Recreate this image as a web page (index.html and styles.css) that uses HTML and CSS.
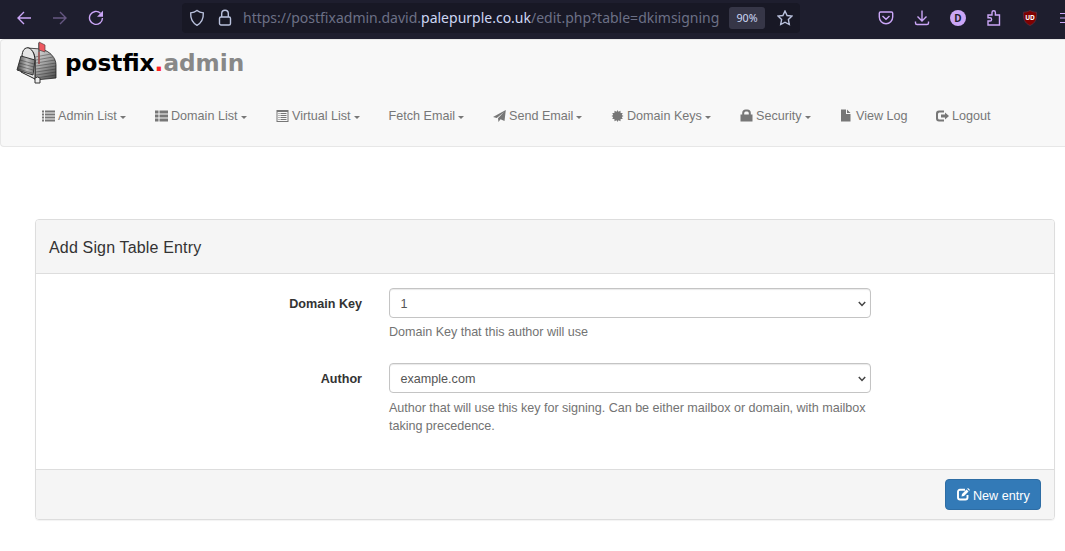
FILE: index.html
```html
<!DOCTYPE html>
<html lang="en">
<head>
<meta charset="utf-8">
<title>Postfix Admin</title>
<link rel="stylesheet" href="styles.css">
</head>
<body>
<header class="browser">
  <div class="history">
    <svg width="16" height="16" viewBox="0 0 16 16"><path d="M15 8H2M8 2L2 8l6 6"/></svg>
    <svg class="dim" width="16" height="16" viewBox="0 0 16 16"><path d="M1 8h13M8 2l6 6-6 6"/></svg>
    <svg width="16" height="16" viewBox="0 0 16 16"><path d="M12.500 3.200A6.500 6.500 0 1 0 14.500 8"/><path class="solid" d="M15 .8v6H9z"/></svg>
  </div>
  <div class="address">
    <svg width="16" height="18" viewBox="0 0 16 18"><path d="M8 1.500c2 1.600 4 2.200 6.300 2.400.3 6-1.600 9.800-6.300 12.400C3.300 13.700 1.400 9.900 1.700 3.900 4 3.700 6 3.100 8 1.500z"/></svg>
    <svg class="padlock" width="14" height="18" viewBox="0 0 14 18"><rect x="1.500" y="8" width="11" height="8" rx="1.500"/><path d="M3.700 8V4.500a3.300 3.300 0 0 1 6.600 0V8"/></svg>
    <span class="url">https://postfixadmin.david.<b>palepurple.co.uk</b>/edit.php?table=dkimsigning</span>
    <span class="zoom">90%</span>
    <svg class="star" width="16" height="16" viewBox="0 0 16 16"><path d="M8 1l2.100 4.500 4.900.6-3.600 3.400.9 5L8 12.200 3.700 14.500l.9-5L1 6.100l4.900-.6z"/></svg>
  </div>
  <div class="tools">
    <svg width="16" height="16" viewBox="0 0 16 16"><path d="M2.500 2h11q1.200 0 1.200 1.200V7A6.700 6.700 0 0 1 1.300 7V3.200Q1.300 2 2.500 2zM4.500 6L8 9.300 11.500 6"/></svg>
    <svg width="16" height="16" viewBox="0 0 16 16"><path d="M8 .5v10M3.500 6.500L8 11l4.500-4.500M1.500 11.500V13q0 1.500 1.500 1.500h10q1.500 0 1.500-1.500v-1.500"/></svg>
    <span class="avatar">D</span>
    <svg width="16" height="16" viewBox="0 0 16 16"><path d="M2 5h4V2.500a1.700 1.700 0 0 1 3.400 0V5h4.100v10H2v-4h2a1.600 1.600 0 0 0 0-3.200H2z"/></svg>
    <span class="ublock"><svg width="16" height="16" viewBox="0 0 16 16"><path d="M8 .5c2 1.200 4 1.700 6.500 1.700C15 9 13.500 13 8 15.500 2.500 13 1 9 1.500 2.200 4 2.200 6 1.700 8 .5z"/></svg><i>UD</i></span>
    <svg class="menu" width="16" height="16" viewBox="0 0 16 16"><path d="M0 3.500h15M0 8h15M0 12.500h15"/></svg>
  </div>
</header>

<div class="navbar">
  <div class="brand">
    <svg class="mailbox" width="44" height="44" viewBox="0 0 44 44">
      <defs>
        <linearGradient id="side" x1="0" y1="0" x2="1" y2="1"><stop offset="0" stop-color="#f5f5f5"/><stop offset=".5" stop-color="#aaa"/><stop offset="1" stop-color="#444"/></linearGradient>
        <linearGradient id="door"><stop offset="0" stop-color="#444"/><stop offset=".55" stop-color="#bbb"/><stop offset="1" stop-color="#777"/></linearGradient>
      </defs>
      <path d="M12 7l14 1c9 2 15 9 15 16v13l-21 2V20C20 12 17 8 12 7z" fill="url(#side)" stroke="#222" stroke-width=".8"/>
      <path class="hatch" d="M20 16l16-3M21 19l17-3M21 22l19-3M21 25l20-3M21 28l20-3M21 31l20-3M21 34l20-3M21 37l20-3"/>
      <path d="M7 16C7 9 10 6 14 7c4 2 6 7 6 14v17L6 31z" fill="#e6e6e6" stroke="#222"/>
      <path d="M6 15l14 4-2 15L2 29z" fill="url(#door)" stroke="#333"/>
      <path class="hatch" d="M5 19l14 4M4 22l15 4M4 25l14 4M3 28l14 4"/>
      <path d="M20 37v5h5v-5q-2.500-2-5 0z" fill="#eee" stroke="#333"/>
      <path d="M24 23V2" stroke="#555" stroke-width="1.500"/>
      <path d="M24 23V11" stroke="#c55" stroke-width="1"/>
      <path d="M24 1l6 3v7l-6-2z" fill="#ef5961" stroke="#544" stroke-width=".7"/>
    </svg>
    <span class="wordmark">postfix<em>.</em><span>admin</span></span>
  </div>
  <nav>
    <a class="w1"><svg width="13" height="12" viewBox="0 0 13 12"><path d="M0 .5h2v2H0zM3 .5h10v2H3zM0 3.500h2v2H0zM3 3.500h10v2H3zM0 6.500h2v2H0zM3 6.500h10v2H3zM0 9.500h2v2H0zM3 9.500h10v2H3z"/></svg><span>Admin List</span><i class="caret"></i></a>
    <a class="w2"><svg width="13" height="12" viewBox="0 0 13 12"><path d="M0 .5h3.500v3H0zM4.500.5H13v3H4.500zM0 4.500h3.500v3H0zM4.500 4.500H13v3H4.500zM0 8.500h3.500v3H0zM4.500 8.500H13v3H4.500z"/></svg><span>Domain List</span><i class="caret"></i></a>
    <a class="w3"><svg width="13" height="12" viewBox="0 0 13 12"><path fill-rule="evenodd" d="M.5 0h12v12H.5zM1.500 2v9h10V2zM2.500 3h1v1h-1zm2 0h6v1h-6zm-2 2h1v1h-1zm2 0h6v1h-6zm-2 2h1v1h-1zm2 0h6v1h-6zm-2 2h1v1h-1zm2 0h6v1h-6z"/></svg><span>Virtual List</span><i class="caret"></i></a>
    <a class="w4"><span>Fetch Email</span><i class="caret"></i></a>
    <a class="w5"><svg width="13" height="12" viewBox="0 0 13 12"><path d="M12.800 0L11.500 11 7.500 9.200 5.500 12 5 8.300 11 2 3.800 8 0 7z"/></svg><span>Send Email</span><i class="caret"></i></a>
    <a class="w6"><svg width="13" height="12" viewBox="0 0 13 12"><path d="M6.500 0l.9 1.700L9.500.8l.1 2.100 2.100.1-.9 1.900L12.500 6l-1.700 1.100.9 1.900-2.100.1-.1 2.100-2.100-.9L6.500 12l-.9-1.700-2.100.9-.1-2.100L1.300 9l.9-1.900L.5 6l1.700-1.100L1.300 3l2.100-.1.100-2.100 2.100.9z"/></svg><span>Domain Keys</span><i class="caret"></i></a>
    <a class="w7"><svg class="tall" width="13" height="13" viewBox="0 0 13 13"><path fill-rule="evenodd" d="M.5 5.500h1.700V4a3.500 3.500 0 0 1 3.500-3.500h1.600A3.500 3.500 0 0 1 10.800 4v1.500h1.700v7H.5zM4.200 5.500h4.600V4.200q0-1.700-1.500-1.700H5.700q-1.500 0-1.500 1.700z"/></svg><span>Security</span><i class="caret"></i></a>
    <a class="w8"><svg class="tall file" width="12" height="13" viewBox="0 0 12 13"><path d="M1 .5h5V5h4.500v7.500H1zM7 .5L10.500 4H7z"/></svg><span>View Log</span></a>
    <a class="w9"><svg width="13" height="12" viewBox="0 0 13 12"><path d="M8 .5v2H3.500q-1.500 0-1.500 1.500v4q0 1.500 1.500 1.500H8v2H3Q0 11.500 0 8.500v-5q0-3 3-3zM9 2.500L13 6 9 9.500v-2H5v-3h4z"/></svg><span>Logout</span></a>
  </nav>
</div>

<main class="panel">
  <h4>Add Sign Table Entry</h4>
  <form class="fields">
    <div class="field">
      <label>Domain Key</label>
      <div class="control">
        <div class="select"><span>1</span><svg width="8" height="6" viewBox="0 0 8 6"><path d="M.8 1L4 4.500 7.200 1"/></svg></div>
        <p>Domain Key that this author will use</p>
      </div>
    </div>
    <div class="field">
      <label>Author</label>
      <div class="control">
        <div class="select"><span>example.com</span><svg width="8" height="6" viewBox="0 0 8 6"><path d="M.8 1L4 4.500 7.200 1"/></svg></div>
        <p class="long">Author that will use this key for signing. Can be either mailbox or domain, with mailbox taking precedence.</p>
      </div>
    </div>
  </form>
  <footer>
    <button type="button"><svg width="13" height="13" viewBox="0 0 13 13"><path d="M8 1.800H3q-2 0-2 2v5.700q0 2 2 2h5.500q2 0 2-2V7" fill="none" stroke="#fff" stroke-width="1.900"/><path d="M4.500 8.500L5 6l4.500-4.500 2 2L7 8zM10.200.8l.8-.8 2 2-.8.8z" fill="#fff"/></svg><span>New entry</span></button>
  </footer>
</main>
</body>
</html>
```

FILE: styles.css
```css
* { box-sizing: border-box; }
body {
  margin: 0;
  height: 551px;
  overflow: hidden;
  background: #fff;
  color: #333;
  font: 12.6px/18px "Liberation Sans", Arial, sans-serif;
}
svg { display: block; flex: none; }

.browser {
  display: flex;
  align-items: center;
  height: 39px;
  padding-bottom: 3px;
  background: #1e1e2e;
  overflow: hidden;
}
.browser > div { flex: none; }
.browser svg { fill: none; stroke: #cba6f7; stroke-width: 1.4; }
.history { display: flex; gap: 20px; width: 182px; padding-left: 16px; }
.history .dim { opacity: .42; }
.browser .history .solid { fill: #cba6f7; stroke: none; }
.address {
  display: flex;
  align-items: center;
  width: 618px;
  height: 30px;
  padding-left: 7px;
  border-radius: 4px;
  background: #181825;
}
.browser .address svg { stroke: #bac2de; }
.address .padlock { margin-left: 13px; }
.url {
  flex: none;
  width: 478px;
  margin-left: 11px;
  color: #6c7086;
  font: 14px/20px "Noto Sans", sans-serif;
  white-space: nowrap;
}
.url b { color: #cdd6f4; font-weight: 400; }
.zoom {
  flex: none;
  width: 36px;
  height: 22px;
  margin-left: 8px;
  border-radius: 3px;
  background: #363647;
  color: #cdd6f4;
  font: 10.7px/22px "Noto Sans", sans-serif;
  text-align: center;
}
.address .star { margin-left: 12px; }
.tools { display: flex; align-items: center; gap: 20px; padding-left: 78px; }
.avatar {
  flex: none;
  width: 16px;
  height: 16px;
  border-radius: 50%;
  background: #cba6f7;
  color: #1e1e2e;
  font: bold 10px/16px "Noto Sans", sans-serif;
  text-align: center;
}
.ublock { display: grid; place-items: center; }
.ublock svg, .ublock i { grid-area: 1 / 1; }
.browser .ublock svg { fill: #800000; stroke: #593040; stroke-width: .8; }
.ublock i { z-index: 1; color: #fff; font: bold 6.5px/8px "Noto Sans", sans-serif; }
.browser .menu { margin-left: 2px; stroke-width: 1.2; }

.navbar {
  height: 108px;
  border: 1px solid #e7e7e7;
  border-right: 0;
  border-radius: 4px 0 0 4px;
  background: #f8f8f8;
}
.brand { display: flex; height: 58px; padding: 1px 0 0 14px; }
.mailbox .hatch { fill: none; stroke: #222; stroke-width: .4; }
.wordmark {
  margin: 8px 0 0 6px;
  color: #000;
  font: bold 23.2px/28px "DejaVu Sans", sans-serif;
  white-space: nowrap;
}
.wordmark em { color: #f22; font-style: normal; }
.wordmark span { color: #888; }
nav { display: flex; padding-left: 41px; color: #777; }
nav a { display: flex; align-items: center; flex: none; height: 35px; white-space: nowrap; }
nav svg { margin-right: 3px; fill: #777; }
nav .tall { margin-bottom: 1px; }
nav .file { margin-right: 4px; }
.caret {
  margin: 4px 0 0 3px;
  border: 3.5px solid transparent;
  border-top-color: #777;
  border-bottom: 0;
}
.w1 { width: 113px; }
.w2 { width: 121px; }
.w3 { width: 112.5px; }
.w4 { width: 104.5px; }
.w5 { width: 118px; }
.w6 { width: 129px; }
.w7 { width: 100px; }
.w8 { width: 96px; }

.panel {
  width: 1020px;
  height: 301px;
  margin: 72px 0 0 35px;
  border: 1px solid #ddd;
  border-radius: 4px;
  box-shadow: 0 1px 1px rgba(0, 0, 0, .05);
}
h4 {
  height: 54px;
  margin: 0;
  padding: 1px 0 0 13px;
  border-bottom: 1px solid #ddd;
  border-radius: 3px 3px 0 0;
  background: #f5f5f5;
  font: 16px/54px "Liberation Sans", Arial, sans-serif;
  letter-spacing: .16px;
}
.fields { height: 195px; padding-top: 14px; }
.field { display: grid; grid-template-columns: 326px 482px; column-gap: 27px; height: 75px; }
label { padding-top: 7px; font-weight: 700; text-align: right; }
.select {
  display: flex;
  align-items: center;
  justify-content: space-between;
  height: 30px;
  padding: 2px 4px 0 10.5px;
  border: 1px solid #c4c4c4;
  border-radius: 4px;
  box-shadow: inset 0 1px 1px rgba(0, 0, 0, .09);
  color: #555;
}
.select svg { fill: none; stroke: #444; stroke-width: 1.5; }
.control p { margin: 5px 0 0; color: #737373; letter-spacing: -.035px; }
.control .long { margin-top: 6px; }
footer {
  display: flex;
  justify-content: flex-end;
  height: 50px;
  padding: 9px 13px 0 0;
  border-top: 1px solid #ddd;
  border-radius: 0 0 3px 3px;
  background: #f5f5f5;
}
button {
  display: flex;
  align-items: center;
  width: 96px;
  height: 31px;
  padding: 0 0 0 11px;
  border: 1px solid #2e6da4;
  border-radius: 4px;
  background: #337ab7;
  color: #fff;
  font: 12.6px/18px "Liberation Sans", Arial, sans-serif;
}
button span { margin: 2px 0 0 3px; white-space: nowrap; }
```
